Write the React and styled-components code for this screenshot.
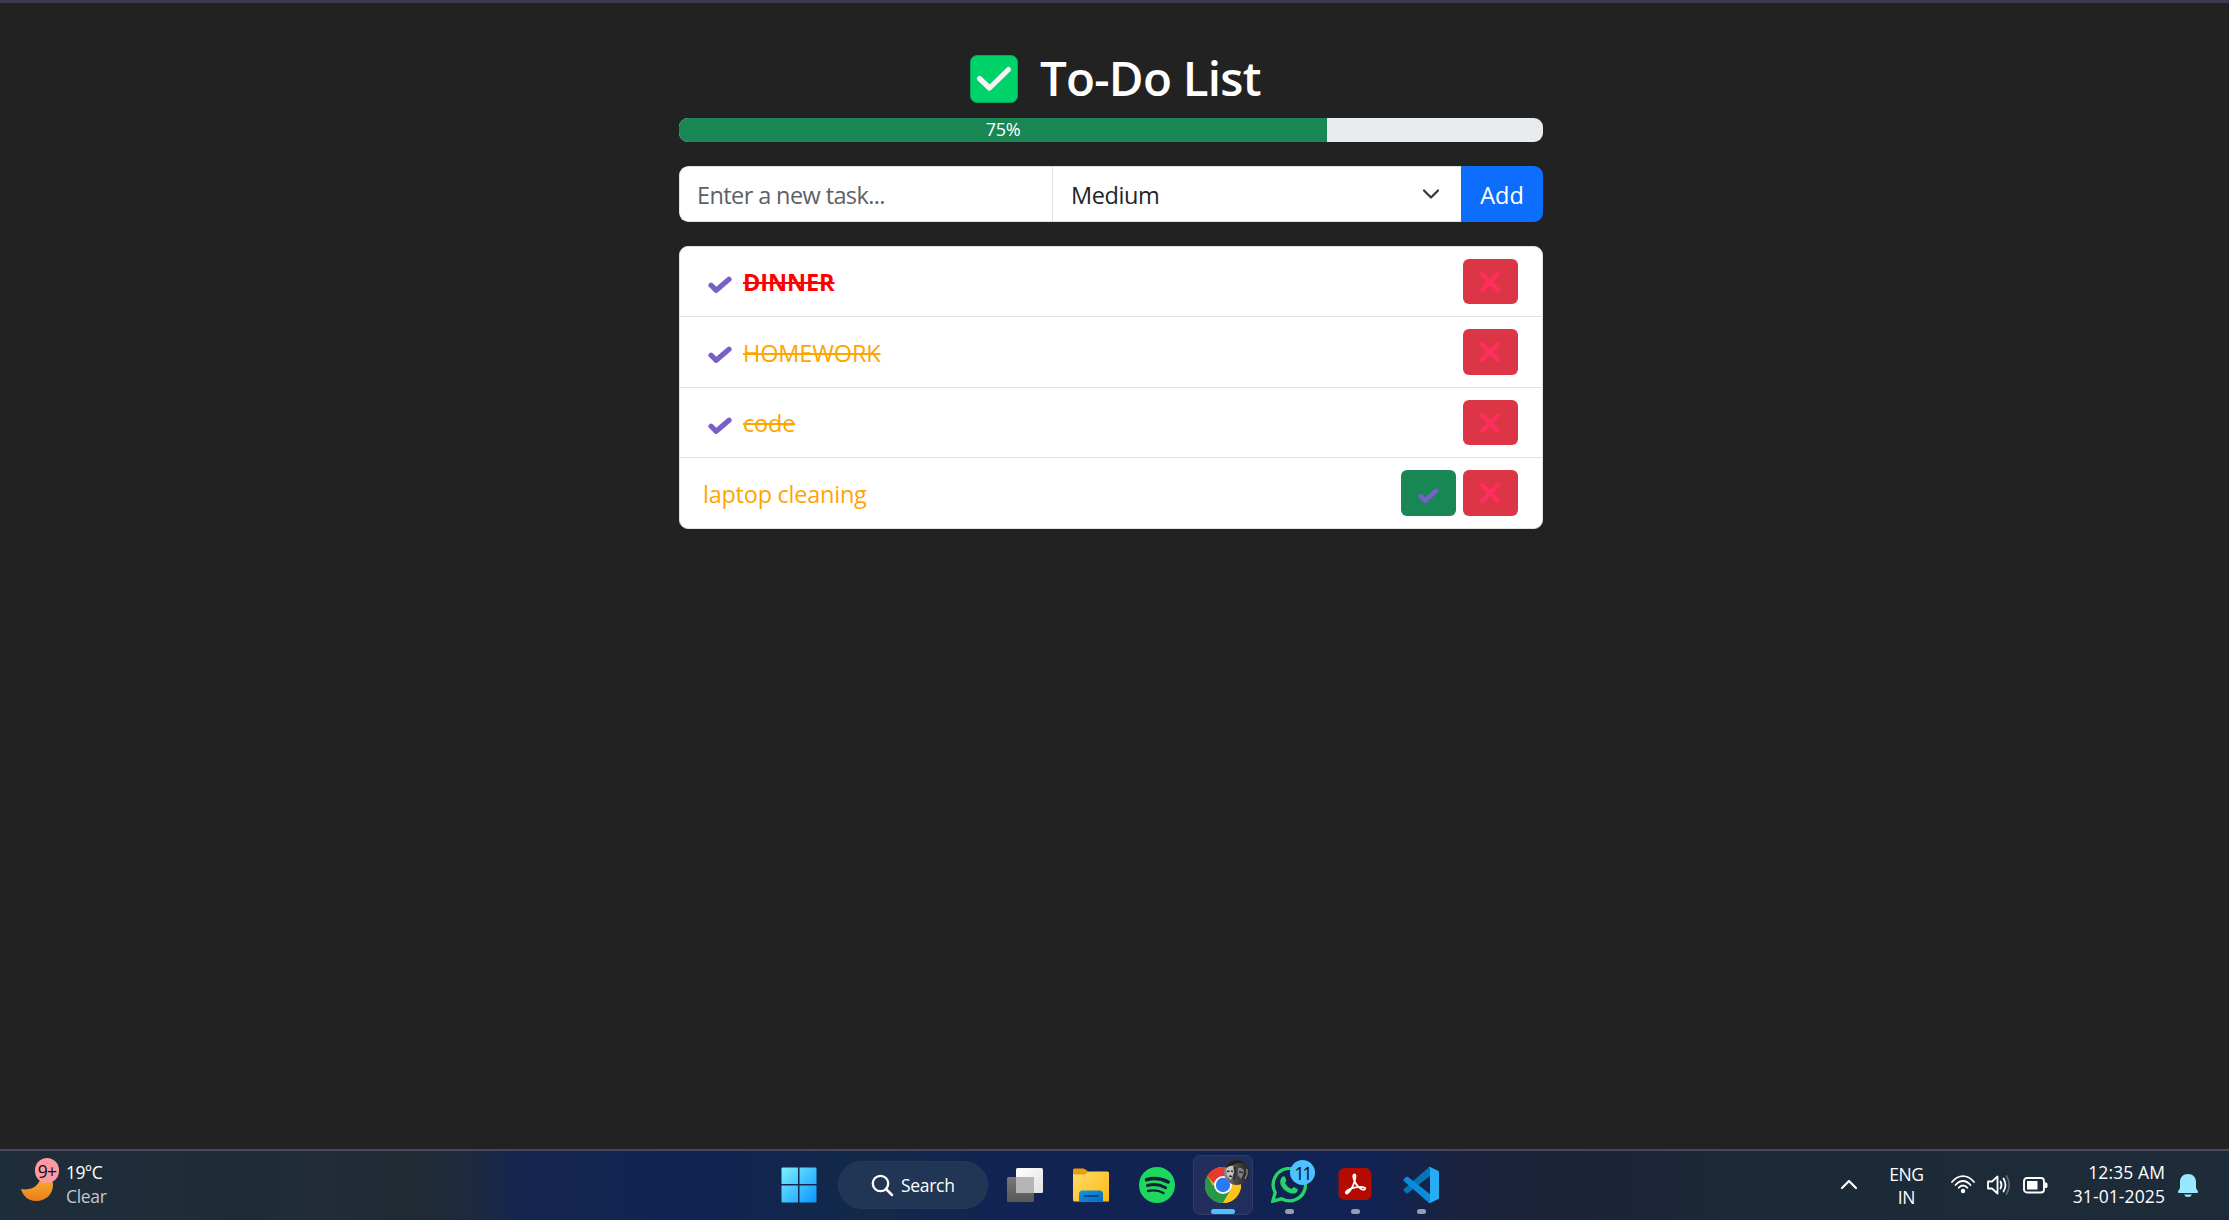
import React from 'react';
import styled, { createGlobalStyle } from 'styled-components';

const Global = createGlobalStyle`
  * { box-sizing: border-box; }
  body { margin: 0; background: #222222; font-family: "Open Sans", "Noto Sans", sans-serif; }
  svg { display: block; flex: none; }
`;

const Screen = styled.div`
  width: 100%;
  height: 1220px;
  display: flex;
  flex-direction: column;
  background: #222222;
  border-top: 3px solid #3c3c4e;
  overflow: hidden;
`;

const Main = styled.main`
  flex: 1;
  min-height: 0;
  width: 864px;
  margin-left: 679px;
  padding-top: 41px;
  display: flex;
  flex-direction: column;
`;

const Heading = styled.header`
  height: 74px;
  padding: 11px 0 0 291px;
  display: flex;
  align-items: flex-start;
  gap: 22px;
`;

const Text = styled.span`
  white-space: pre;
  font-size: ${p => p.$size || 23.5}px;
  font-weight: ${p => p.$weight || 400};
  line-height: ${p => p.$line || 36}px;
  letter-spacing: ${p => p.$ls || 0}px;
  color: ${p => p.$color || '#fff'};
`;

const Title = styled.h1`
  margin: -6px 0 0;
  font-size: 47.5px;
  font-weight: 600;
  line-height: 58px;
  letter-spacing: -0.75px;
  white-space: nowrap;
  color: #fff;
`;

const Progress = styled.div`
  height: 24px;
  flex: none;
  border-radius: 9px;
  background: #e9ecef;
  overflow: hidden;
  display: flex;
`;

const ProgressBar = styled.div`
  width: 75%;
  padding-bottom: 2px;
  background: #198754;
  display: flex;
  align-items: center;
  justify-content: center;
`;

const InputGroup = styled.form`
  height: 56px;
  flex: none;
  margin-top: 24px;
  display: flex;
  border-radius: 9px;
  overflow: hidden;
`;

const Field = styled.div`
  width: ${p => p.$width}px;
  padding: 2px 20px 0 ${p => (p.$first ? 17 : 18)}px;
  display: flex;
  align-items: center;
  justify-content: space-between;
  background: #fff;
  border: 1px solid #dee2e6;
  border-right-width: 0;
  border-radius: ${p => (p.$first ? '9px 0 0 9px' : 0)};
`;

const AddButton = styled.button`
  width: 82px;
  padding: 2px 0 0;
  border: 0;
  background: #0d6efd;
  font-family: inherit;
`;

const List = styled.ul`
  list-style: none;
  margin: 24px 0 0;
  padding: 0;
  background: #fff;
  border: 1px solid #dee2e6;
  border-radius: 9px;
`;

const Row = styled.li`
  height: ${p => p.$height}px;
  padding: 0 24px 0 ${p => (p.$done ? 28 : 23)}px;
  display: flex;
  align-items: center;
  border-bottom: ${p => (p.$last ? 0 : 1)}px solid #dee2e6;
`;

const TaskName = styled.span`
  flex: 1;
  padding-top: ${p => p.$drop}px;
  margin-left: ${p => (p.$done ? 11 : 0)}px;
  font-size: 23.5px;
  line-height: 36px;
  font-weight: ${p => p.$weight || 400};
  letter-spacing: ${p => p.$ls}px;
  color: ${p => p.$color};
  text-decoration: ${p => (p.$done ? 'line-through' : 'none')};
  text-decoration-thickness: 2px;
`;

const CheckSlot = styled.span`
  padding-top: 6px;
`;

const Actions = styled.div`
  display: flex;
  gap: 7px;
`;

const IconButton = styled.button`
  width: 55px;
  height: ${p => p.$height}px;
  padding: 0 1px 0 0;
  border: 0;
  border-radius: 6px;
  display: flex;
  align-items: center;
  justify-content: center;
  background: ${p => p.$bg};
`;

const Taskbar = styled.footer`
  height: 71px;
  flex: none;
  display: flex;
  justify-content: space-between;
  border-top: 2px solid #434c58;
  background: linear-gradient(90deg, #1e2d3a 0, #1f2c38 250px, #222b34 420px, #1c293f 470px, #14264f 520px, #112353 700px, #122a48 870px, #112353 1000px, #112354 1380px, #1a2340 1450px, #1c2238 1540px, #1c2a38 1760px, #1e2b38 2229px);
`;

const Weather = styled.div`
  width: 140px;
  padding: 7px 0 0 20px;
  display: flex;
  gap: 8px;
`;

const Lines = styled.div`
  display: flex;
  flex-direction: column;
  align-items: ${p => p.$align || 'flex-start'};
  padding-top: ${p => p.$top || 0}px;
`;

const Apps = styled.nav`
  position: absolute;
  left: 771px;
  height: 69px;
  display: flex;
  align-items: flex-start;
`;

const Search = styled.div`
  width: 150px;
  height: 48px;
  margin: 10px 4px 0 21px;
  border-radius: 24px;
  background: #213654;
  border: 1px solid #263a58;
  display: flex;
  align-items: center;
  padding-left: 32px;
  gap: 7px;
`;

const AppSlot = styled.div`
  position: relative;
  width: 60px;
  height: 60px;
  margin: 4px 3px 0;
  border-radius: 7px;
  border: 1px solid ${p => (p.$active ? '#2f3b68' : 'transparent')};
  background: ${p => (p.$active ? '#222f5c' : 'transparent')};
  display: flex;
  justify-content: center;
  padding-top: 11px;

  &::after {
    content: '';
    position: absolute;
    bottom: 0;
    width: ${p => (p.$active ? 24 : 9)}px;
    height: 5px;
    border-radius: 3px;
    background: ${p => (p.$active ? '#4cc2ff' : p.$running ? '#969db3' : 'transparent')};
  }
`;

const Badge = styled.span`
  position: absolute;
  left: ${p => p.$x}px;
  top: ${p => p.$y}px;
  width: ${p => p.$w}px;
  height: 25px;
  border-radius: 13px;
  background: ${p => p.$bg};
  display: flex;
  align-items: center;
  justify-content: center;
`;

const MoonBox = styled.div`
  position: relative;
  width: 38px;
  height: 50px;
`;

const Tray = styled.div`
  padding-right: 30px;
  display: flex;
`;

const TrayItem = styled.div`
  margin: ${p => p.$top}px ${p => p.$right || 0}px 0 ${p => p.$left || 0}px;
`;

const CheckMark = ({ size = 24 }) => (
  <svg width={size} height={size * 0.75} viewBox="0 0 24 18">
    <path d="M3 9.2 8.2 14.3 21 3.2" fill="none" stroke="#7a5fc8" strokeWidth="5.2" strokeLinecap="round" strokeLinejoin="round" />
  </svg>
);

const Cross = () => (
  <svg width="22" height="22" viewBox="0 0 22 22">
    <path d="M3 3 19 19M19 3 3 19" stroke="#ff2e5f" strokeWidth="4.4" strokeLinecap="round" />
  </svg>
);

const tasks = [
  { name: 'DINNER', color: '#ff0000', weight: 700, done: true, height: 70, button: 45, ls: -0.1, drop: 0 },
  { name: 'HOMEWORK', color: '#ffa500', done: true, height: 71, button: 46, ls: -0.15, drop: 2 },
  { name: 'code', color: '#ffa500', done: true, height: 70, button: 45, ls: -0.2, drop: 1 },
  { name: 'laptop cleaning', color: '#ffa500', done: false, height: 70, button: 46, ls: -0.25, drop: 2 },
];

const Windows = () => (
  <svg width="36" height="36" viewBox="0 0 36 36">
    <defs><linearGradient id="win" x1="0" y1="0" x2="1" y2="1"><stop offset="0" stopColor="#7cf3ff" /><stop offset="1" stopColor="#0a94ff" /></linearGradient></defs>
    <path fill="url(#win)" d="M1.5.5H17v16.5H.5V1.5Q.5.5 1.5.5ZM18.5.5H34.5q1 0 1 1V17H18.5ZM.5 18.5H17V35.5H1.5q-1 0-1-1ZM18.5 18.5H35.5v16q0 1-1 1H18.5Z" />
  </svg>
);

const TaskView = () => (
  <svg width="38" height="36" viewBox="0 0 38 36">
    <defs>
      <linearGradient id="tv1" x1="0" y1="0" x2="0" y2="1"><stop offset="0" stopColor="#777" /><stop offset="1" stopColor="#585858" /></linearGradient>
      <linearGradient id="tv2" x1="0" y1="0" x2="1" y2="1"><stop offset="0" stopColor="#fff" /><stop offset="1" stopColor="#e2e2e4" /></linearGradient>
    </defs>
    <rect x="1" y="10" width="27" height="25" rx="1.5" fill="url(#tv1)" />
    <rect x="10" y="1" width="27" height="25" rx="1.5" fill="url(#tv2)" />
    <path d="M10 10H28V26H11.500q-1.500 0-1.500-1.500Z" fill="#b5b5b5" />
  </svg>
);

const Folder = () => (
  <svg width="38" height="36" viewBox="0 0 38 36">
    <defs>
      <linearGradient id="fo1" x1="0" y1="0" x2="1" y2="1"><stop offset="0" stopColor="#ffdb70" /><stop offset="1" stopColor="#fcb90c" /></linearGradient>
      <linearGradient id="fo2" x1="0" y1="0" x2="1" y2="1"><stop offset="0" stopColor="#109be6" /><stop offset="1" stopColor="#0967bd" /></linearGradient>
    </defs>
    <path d="M1 9V3q0-1.500 1.500-1.500H11q1 0 2 .8L17 5H30V10H1Z" fill="#e5a00a" />
    <path d="M1 7.500H12.500L17 4.500H35.500q1.500 0 1.500 1.500V34.500H2.500q-1.500 0-1.500-1.500Z" fill="url(#fo1)" />
    <path d="M7 34.500V27q0-3.500 3.500-3.500h17q3.500 0 3.500 3.500v7.500Z" fill="url(#fo2)" />
    <path d="M12.500 29h13" stroke="#06478b" strokeWidth="2" strokeLinecap="round" />
  </svg>
);

const Spotify = () => (
  <svg width="36" height="36" viewBox="0 0 36 36">
    <circle cx="18" cy="18" r="18" fill="#1ed75f" />
    <g fill="none" stroke="#0e2138" strokeLinecap="round">
      <path d="M7.500 12.700c7.500-2.200 15-1.300 21.700 2.300" strokeWidth="3.500" />
      <path d="M8.500 18.500c6.500-1.800 12.500-1 18.200 2.200" strokeWidth="2.900" />
      <path d="M9 24c5.500-1.200 10.500-.7 15.500 2" strokeWidth="2.400" />
    </g>
  </svg>
);

const Chrome = () => (
  <svg width="36" height="36" viewBox="0 0 36 36">
    <circle cx="18" cy="18" r="18" fill="#fbbc05" />
    <path d="M18 18H10.200L2.400 9A18 18 0 0 1 33.600 9H18Z" fill="#e33b2e" />
    <path d="M2.400 9A18 18 0 0 0 18 36L25.800 22.500H18V18H7.600Z" fill="#279847" />
    <path d="M18 36 25.800 22.500 25.800 13.500 18 9H33.600A18 18 0 0 1 18 36Z" fill="#fcc31c" />
    <circle cx="18" cy="18" r="9" fill="#fff" />
    <circle cx="18" cy="18" r="7.200" fill="#2a7af3" />
  </svg>
);

const Avatar = () => (
  <svg width="25" height="25" viewBox="0 0 25 25">
    <defs>
      <clipPath id="av"><circle cx="12.500" cy="12.500" r="12.500" /></clipPath>
      <linearGradient id="avbg"><stop offset="0" stopColor="#8a8a8a" /><stop offset=".45" stopColor="#4a4a4a" /><stop offset="1" stopColor="#242424" /></linearGradient>
    </defs>
    <g clipPath="url(#av)">
      <rect width="25" height="25" fill="url(#avbg)" />
      <path d="M0 0H25V6Q17 1 11 4T0 8Z" fill="#202020" />
      <path d="M2 9q3-4 7-3l1 6-3 8-4-4Z" fill="#c4c4c4" />
      <path d="M14 8q5-1 6 4l-3 7-3-4Z" fill="#828282" />
      <path d="M3 11.500l2.500-.5M7 11l2 .5M5 16l3 .5M11 7q1 6-1 13M15 12l4 .5" stroke="#2a2a2a" strokeWidth="1.500" fill="none" />
      <path d="M23 9q1 6-2 10" stroke="#aaa" fill="none" />
    </g>
  </svg>
);

const WhatsApp = () => (
  <svg width="36" height="36" viewBox="0 0 36 36">
    <path d="M1.800 34.200 4.200 25.500A16.200 16.200 0 1 1 10.500 31.800Z" fill="none" stroke="#25d366" strokeWidth="3.300" strokeLinejoin="miter" />
    <path d="M11.300 9.700c.8-.8 2.200-.8 2.700.3l1.300 3.200c.3.800-.1 1.300-1.300 2.800 1.700 3 3.700 4.700 6.700 6 1.200-1.600 1.700-2.100 2.500-1.700l3.200 1.600c.7.400.5 2-.5 3.200-1.400 1.600-3.900 2-7 .9-5-1.900-8.900-5.800-9.600-9.800-.4-2.700.6-5.100 2-6.500Z" fill="#25d366" />
  </svg>
);

const Acrobat = () => (
  <svg width="34" height="34" viewBox="0 0 34 34">
    <rect x=".5" y="1" width="33" height="32" rx="6" fill="#b30b00" />
    <path d="M16.500 7.500c-2.300 0-1 5.400 1.400 9.300 2.600 4.300 7.200 7.200 9 5.400 1.700-1.900-3.500-3.100-9.500-1.800-6.100 1.300-10.500 4.100-9.400 5.700 1.300 1.700 5-2.800 7-7.600 1.700-4.200 3.500-11 1.500-11Z" fill="none" stroke="#fff" strokeWidth="1.900" />
  </svg>
);

const VSCode = () => (
  <svg width="36" height="36" viewBox="0 0 36 36">
    <path d="M.8 23.800 3 25.900q1 .8 2.100 0L27 9V0Q26 .2 25 1L.8 22.100Q.1 23 .8 23.800Z" fill="#0673b4" />
    <path d="M.8 12.200 3 10.100q1-.8 2.100 0L27 27V36Q26 35.800 25 35L.8 13.900Q.1 13 .8 12.200Z" fill="#0a8bdc" />
    <path d="M27 0 35 3.700Q36 4.200 36 5.300V30.700Q36 31.800 35 32.300L27 36Q25.500 36 25 35 27 36 27 34V2Q27 0 25 1 25.500 0 27 0Z" fill="#28adf5" />
  </svg>
);

const App = () => (
  <Screen>
    <Global />
    <Main>
      <Heading>
        <svg width="48" height="48" viewBox="0 0 48 48">
          <rect x=".5" y=".5" width="47" height="47" rx="6.500" fill="#00d26a" stroke="#0aa659" />
          <path d="M9.500 23.500 19.500 33 38.500 14.500" fill="none" stroke="#f4f4f4" strokeWidth="5.200" strokeLinecap="round" strokeLinejoin="round" />
        </svg>
        <Title>To-Do List</Title>
      </Heading>
      <Progress><ProgressBar><Text $size={18} $line={22} $ls={-0.3}>75%</Text></ProgressBar></Progress>
      <InputGroup>
        <Field $width={373} $first><Text $color="#5c6167" $ls={-0.6}>Enter a new task...</Text></Field>
        <Field $width={409}>
          <Text $color="#212529" $ls={-0.4}>Medium</Text>
          <svg width="20" height="14" viewBox="0 0 20 14"><path d="M3 2.500 10 9.500 17 2.500" fill="none" stroke="#343a40" strokeWidth="2.300" strokeLinecap="round" strokeLinejoin="round" /></svg>
        </Field>
        <AddButton type="button"><Text>Add</Text></AddButton>
      </InputGroup>
      <List>
        {tasks.map((t, i) => (
          <Row key={t.name} $height={t.height} $done={t.done} $last={i === 3}>
            {t.done && <CheckSlot><CheckMark /></CheckSlot>}
            <TaskName $color={t.color} $weight={t.weight} $done={t.done} $ls={t.ls} $drop={t.drop}>{t.name}</TaskName>
            <Actions>
              {!t.done && <IconButton $bg="#198754" $height={t.button}><CheckSlot><CheckMark size={21} /></CheckSlot></IconButton>}
              <IconButton $bg="#dc3545" $height={t.button}><Cross /></IconButton>
            </Actions>
          </Row>
        ))}
      </List>
    </Main>
    <Taskbar>
      <Weather>
        <MoonBox>
          <svg width="38" height="50" viewBox="0 0 38 50">
            <defs><linearGradient id="moon" x1="0" y1="0" x2="0" y2="1"><stop offset="0" stopColor="#f5bd35" /><stop offset="1" stopColor="#ee7d18" /></linearGradient></defs>
            <path d="M1 31C13 33 21 27 21 15 27 13 33 20 33 27 33 36 26 43 16 43 8 43 3 38 1 31Z" fill="url(#moon)" />
          </svg>
          <Badge $x={15} $y={0} $w={24} $bg="#ff99a4"><Text $size={17.5} $line={24} $ls={-0.8} $color="#101010">9+</Text></Badge>
        </MoonBox>
        <Lines $top={2}>
          <Text $size={17.5} $line={24} $ls={-0.6}>19°C</Text>
          <Text $size={17.5} $line={24} $ls={-0.3} $color="#c3c8cd">Clear</Text>
        </Lines>
      </Weather>
      <Apps>
        <TrayItem $top={16} $left={10}><Windows /></TrayItem>
        <Search>
          <svg width="23" height="23" viewBox="0 0 23 23"><circle cx="9.500" cy="9.500" r="7.700" fill="none" stroke="#fff" strokeWidth="2.300" /><path d="M15 15 21 21" stroke="#fff" strokeWidth="2.500" strokeLinecap="round" /></svg>
          <Text $size={17.5} $line={24} $ls={-0.3}>Search</Text>
        </Search>
        <AppSlot><TaskView /></AppSlot>
        <AppSlot><Folder /></AppSlot>
        <AppSlot><Spotify /></AppSlot>
        <AppSlot $active><Chrome /><Badge $x={30} $y={4} $w={25}><Avatar /></Badge></AppSlot>
        <AppSlot $running><WhatsApp /><Badge $x={30} $y={4} $w={25} $bg="#4cc2ff"><Text $size={17.5} $line={24} $ls={-2} $color="#080c10">11</Text></Badge></AppSlot>
        <AppSlot $running><Acrobat /></AppSlot>
        <AppSlot $running><VSCode /></AppSlot>
      </Apps>
      <Tray>
        <TrayItem $top={27} $right={31}><svg width="18" height="12" viewBox="0 0 18 12"><path d="M2 10 9 3 16 10" fill="none" stroke="#fff" strokeWidth="2.200" strokeLinecap="round" strokeLinejoin="round" /></svg></TrayItem>
        <TrayItem $top={12} $right={27}>
          <Lines $align="center"><Text $size={17.5} $line={23} $ls={-0.4}>ENG</Text><Text $size={17.5} $line={23} $ls={-0.4}>IN</Text></Lines>
        </TrayItem>
        <TrayItem $top={24} $right={12}>
          <svg width="24" height="19" viewBox="0 0 24 19"><g fill="none" stroke="#fff" strokeWidth="1.800" strokeLinecap="round"><path d="M1 7Q6 1.200 12 1.200T23 7" /><path d="M4.500 10Q8 6 12 6T19.500 10" /><path d="M7.700 12.800Q9.500 10.500 12 10.500T16.300 12.800" /></g><circle cx="12" cy="16" r="2.200" fill="#fff" /></svg>
        </TrayItem>
        <TrayItem $top={23} $right={12}>
          <svg width="24" height="22" viewBox="0 0 24 22"><g fill="none" stroke="#fff" strokeWidth="1.800" strokeLinecap="round" strokeLinejoin="round"><path d="M1 7.500H5L10.500 2.500V19.500L5 14.500H1Z" /><path d="M13.500 7.500q2 3.500 0 7M16.500 4.500q4 6.500 0 13" /><path d="M19.500 2q5.500 9 0 18" stroke="#5d6872" /></g></svg>
        </TrayItem>
        <TrayItem $top={26} $right={24}>
          <svg width="26" height="17" viewBox="0 0 26 17"><rect x="1" y="1" width="20" height="14.500" rx="3" fill="none" stroke="#fff" strokeWidth="1.900" /><rect x="4" y="4" width="10.500" height="8.500" fill="#fff" /><path d="M22 5.500h1q1.500 0 1.500 1.500v2.500q0 1.500-1.500 1.500h-1Z" fill="#fff" /></svg>
        </TrayItem>
        <TrayItem $top={9} $right={12}>
          <Lines $align="flex-end"><Text $size={17.5} $line={24} $ls={0.1}>12:35 AM</Text><Text $size={17.5} $line={24} $ls={0.1}>31-01-2025</Text></Lines>
        </TrayItem>
        <TrayItem $top={22}>
          <svg width="22" height="26" viewBox="0 0 22 26"><path d="M11 1c5 0 8 3.500 8 8v6l2 3.500q.3 1.500-1 1.500H2q-1.300 0-1-1.500L3 15V9c0-4.500 3-8 8-8ZM7 21.500h8q-1 2.500-4 2.500t-4-2.500Z" fill="#98e9ff" /></svg>
        </TrayItem>
      </Tray>
    </Taskbar>
  </Screen>
);

export default App;
